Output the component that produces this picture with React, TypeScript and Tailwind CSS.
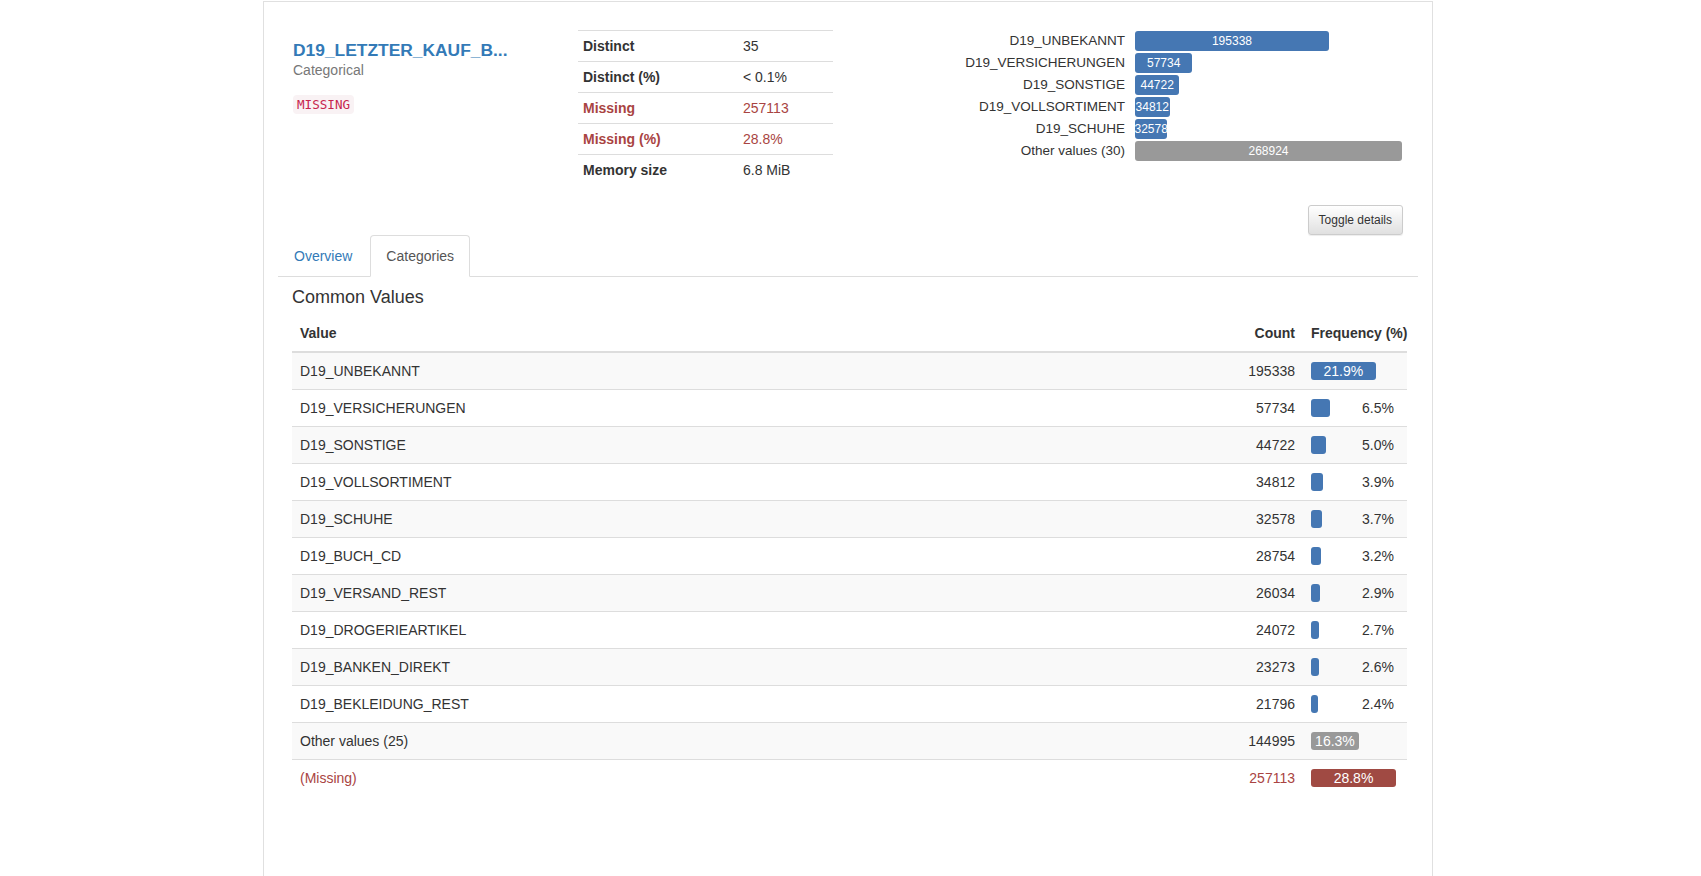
import React from "react";

const stats = [
  { k: "Distinct", v: "35", red: false },
  { k: "Distinct (%)", v: "< 0.1%", red: false },
  { k: "Missing", v: "257113", red: true },
  { k: "Missing (%)", v: "28.8%", red: true },
  { k: "Memory size", v: "6.8 MiB", red: false },
];

const chart = [
  { label: "D19_UNBEKANNT", count: 195338, gray: false },
  { label: "D19_VERSICHERUNGEN", count: 57734, gray: false },
  { label: "D19_SONSTIGE", count: 44722, gray: false },
  { label: "D19_VOLLSORTIMENT", count: 34812, gray: false },
  { label: "D19_SCHUHE", count: 32578, gray: false },
  { label: "Other values (30)", count: 268924, gray: true },
];

type Row = { v: string; c: number; p: string; kind: "blue" | "gray" | "red"; inside: boolean };

const rows: Row[] = [
  { v: "D19_UNBEKANNT", c: 195338, p: "21.9%", kind: "blue", inside: true },
  { v: "D19_VERSICHERUNGEN", c: 57734, p: "6.5%", kind: "blue", inside: false },
  { v: "D19_SONSTIGE", c: 44722, p: "5.0%", kind: "blue", inside: false },
  { v: "D19_VOLLSORTIMENT", c: 34812, p: "3.9%", kind: "blue", inside: false },
  { v: "D19_SCHUHE", c: 32578, p: "3.7%", kind: "blue", inside: false },
  { v: "D19_BUCH_CD", c: 28754, p: "3.2%", kind: "blue", inside: false },
  { v: "D19_VERSAND_REST", c: 26034, p: "2.9%", kind: "blue", inside: false },
  { v: "D19_DROGERIEARTIKEL", c: 24072, p: "2.7%", kind: "blue", inside: false },
  { v: "D19_BANKEN_DIREKT", c: 23273, p: "2.6%", kind: "blue", inside: false },
  { v: "D19_BEKLEIDUNG_REST", c: 21796, p: "2.4%", kind: "blue", inside: false },
  { v: "Other values (25)", c: 144995, p: "16.3%", kind: "gray", inside: true },
  { v: "(Missing)", c: 257113, p: "28.8%", kind: "red", inside: true },
];

function barBg(kind: Row["kind"]) {
  if (kind === "gray") return "bg-[#999999]";
  if (kind === "red") return "bg-[#a04a43]";
  return "bg-[#4577b3]";
}

export default function App() {
  const maxChart = 268924;
  const maxRow = 257113;
  return (
    <div
      className="min-h-[876px] bg-white text-[#333333] text-[14px] leading-[20px]"
      style={{ fontFamily: '"Liberation Sans", Arial, Helvetica, sans-serif' }}
    >
      <div className="ml-[263px] mt-px w-[1170px] h-[875px] border-x border-t border-[#e0e0e0] px-[14px] pt-[28px]">
        {/* top row */}
        <div className="flex">
          <div className="w-[285px] px-[15px]">
            <div className="mt-[10px] text-[17.4px] leading-[20px] font-bold text-[#337ab7] whitespace-nowrap">
              D19_LETZTER_KAUF_B...
            </div>
            <div className="text-[14px] leading-[20px] text-[#777777]">Categorical</div>
            <div className="mt-[14px]">
              <code
                className="inline-block rounded-[4px] bg-[#f9f2f4] px-[4px] py-[2px] text-[12.6px] leading-[15px] text-[#c7254e]"
                style={{ fontFamily: '"DejaVu Sans Mono", Menlo, monospace' }}
              >
                MISSING
              </code>
            </div>
          </div>
          <div className="w-[285px] px-[15px]">
            <div className="w-[255px]">
              {stats.map((s) => (
                <div
                  key={s.k}
                  className={`grid grid-cols-[160px_1fr] border-t border-[#dddddd] ${s.red ? "text-[#a94442]" : "text-[#333333]"}`}
                >
                  <div className="px-[5px] py-[5px] font-bold">{s.k}</div>
                  <div className="px-[5px] py-[5px]">{s.v}</div>
                </div>
              ))}
            </div>
          </div>
          <div className="w-[570px] px-[15px]">
            <div className="flex flex-col">
              {chart.map((b) => (
                <div key={b.label} className="flex h-[22px] items-center">
                  <div className="w-[262px] text-right text-[13.5px] leading-[20px] text-[#333333] whitespace-nowrap">
                    {b.label}
                  </div>
                  <div className="ml-[10px] flex-1 flex items-center">
                    <div
                      className={`flex h-[20px] items-center justify-center rounded-[3px] text-[12px] leading-[20px] text-white whitespace-nowrap ${b.gray ? "bg-[#999999]" : "bg-[#4577b3]"}`}
                      style={{ width: `${(b.count / maxChart) * 267}px` }}
                    >
                      {b.count}
                    </div>
                  </div>
                </div>
              ))}
            </div>
          </div>
        </div>

        {/* toggle */}
        <div className="flex justify-end pr-[15px] mt-[20px]">
          <button className="h-[30px] rounded-[3px] border border-[#cccccc] bg-gradient-to-b from-white to-[#e0e0e0] px-[10px] text-[12px] leading-[18px] text-[#333333] shadow-[inset_0_1px_0_rgba(255,255,255,0.15),0_1px_1px_rgba(0,0,0,0.075)]">
            Toggle details
          </button>
        </div>

        {/* tabs */}
        <div className="flex h-[42px] border-b border-[#dddddd]">
          <div className="mr-[2px] h-[42px] border border-transparent px-[15px] py-[10px] text-[#337ab7]">Overview</div>
          <div className="h-[42px] rounded-t-[4px] border border-[#dddddd] border-b-white bg-white px-[15px] py-[10px] text-[#555555]">
            Categories
          </div>
        </div>

        {/* content */}
        <div className="ml-[14px] w-[1115px]">
          <div className="mt-[10px] mb-[8px] text-[18px] leading-[20px] font-medium text-[#333333]">Common Values</div>
          <div className="grid grid-cols-[1fr_130px_104px] border-b-2 border-[#dddddd] font-bold">
            <div className="px-[8px] py-[8px]">Value</div>
            <div className="px-[8px] py-[8px] text-right">Count</div>
            <div className="px-[8px] py-[8px] whitespace-nowrap">Frequency (%)</div>
          </div>
          {rows.map((r, i) => {
            const red = r.kind === "red";
            return (
              <div
                key={r.v}
                className={`grid grid-cols-[1fr_130px_104px] ${i > 0 ? "border-t border-[#dddddd]" : ""} ${i % 2 === 0 ? "bg-[#f9f9f9]" : "bg-white"} ${red ? "text-[#a94442]" : "text-[#333333]"}`}
              >
                <div className="px-[8px] py-[8px]">{r.v}</div>
                <div className="px-[8px] py-[8px] text-right">{r.c}</div>
                <div className="flex items-center px-[8px] py-[8px]">
                  <div
                    className={`flex h-[18px] shrink-0 items-center justify-center rounded-[3px] text-[14px] leading-[18px] text-white whitespace-nowrap ${barBg(r.kind)}`}
                    style={{ width: `${(r.c / maxRow) * 85}px` }}
                  >
                    {r.inside ? r.p : ""}
                  </div>
                  {!r.inside && <div className="flex-1 pr-[5px] text-right">{r.p}</div>}
                </div>
              </div>
            );
          })}
        </div>
      </div>
    </div>
  );
}
